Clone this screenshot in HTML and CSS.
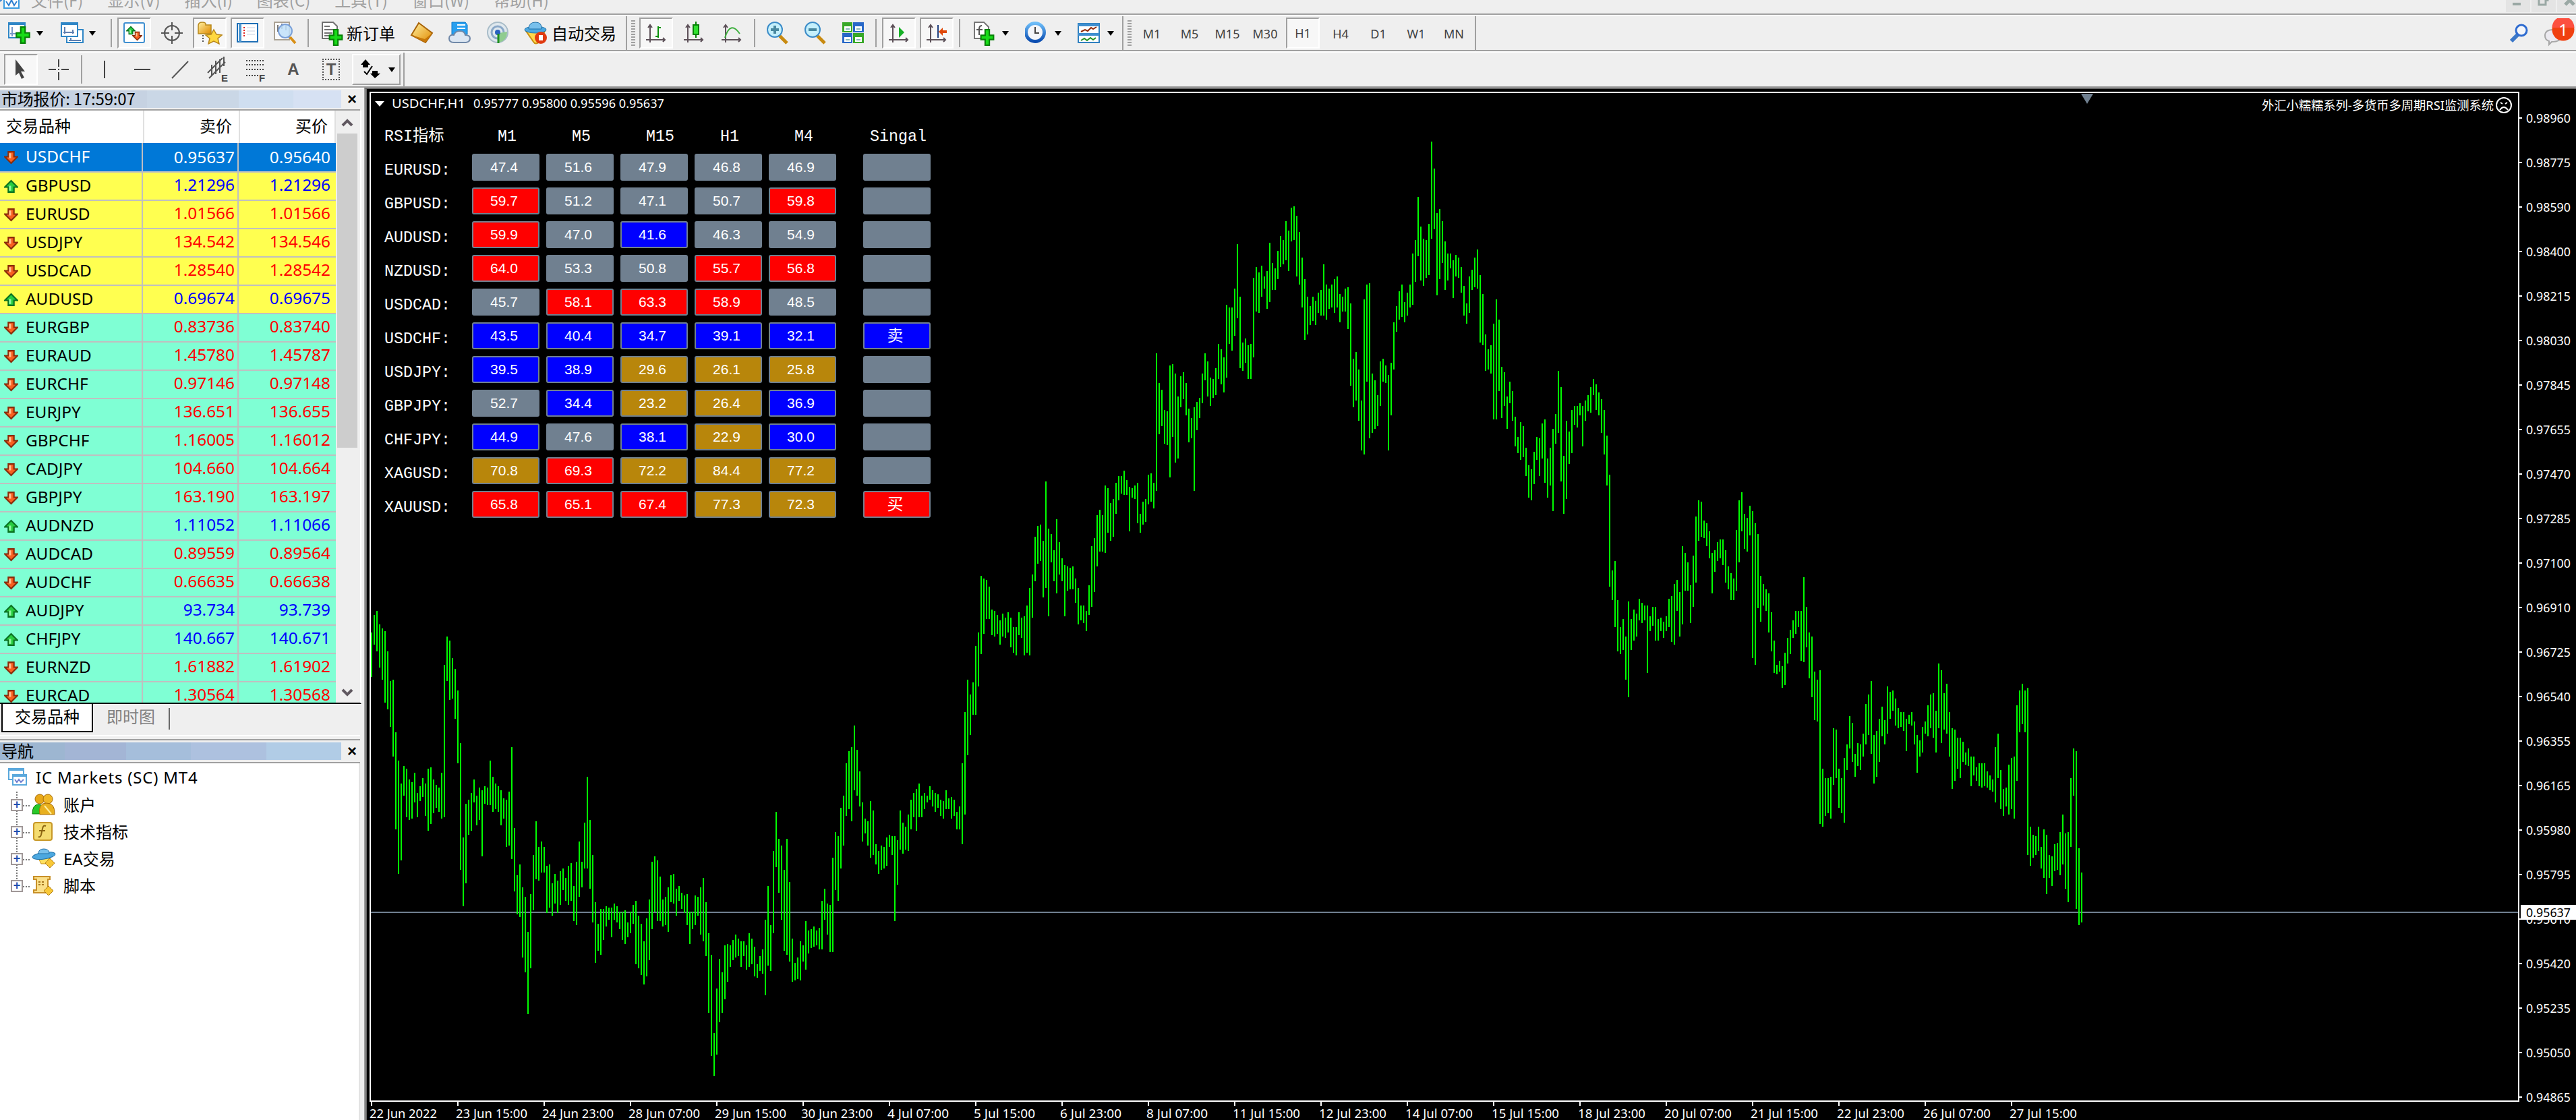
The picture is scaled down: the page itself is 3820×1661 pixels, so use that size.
FILE: index.html
```html
<!DOCTYPE html>
<html lang="zh-CN">
<head>
    <meta charset="UTF-8">
    <title>IC Markets (SC) MT4</title>
    <link rel="stylesheet" href="styles.css">
</head>
<body>
    <svg class="defs">
        <defs>
            <linearGradient id="blueGrad" x1="0" y1="0" x2="0" y2="1"><stop offset="0" stop-color="#6cbcf8"/><stop offset="1" stop-color="#0a4cb0"/></linearGradient>
            <linearGradient id="goldGrad" x1="0" y1="0" x2="1" y2="1"><stop offset="0" stop-color="#fff0a0"/><stop offset="1" stop-color="#e08a00"/></linearGradient>
        </defs>
        <symbol id="plus" viewBox="0 0 20 24"><path d="M7 1h6v8h6v6h-6v8H7v-8H1V9h6z" fill="#18dc18" stroke="#078007" stroke-width="2"/></symbol>
        <symbol id="down" viewBox="0 0 20 20"><path d="M6 2h8v7h5l-9 9-9-9h5z" fill="#f86020" stroke="#8a2c0a" stroke-width="2"/><path d="M7 4h3v7H7z" fill="#ffc090"/></symbol>
        <symbol id="up" viewBox="0 0 20 20"><path d="M6 18h8v-7h5l-9-9-9 9h5z" fill="#28cc40" stroke="#0a7020" stroke-width="2"/><path d="M7 9h3v7H7z" fill="#90f8a0"/></symbol>
        <symbol id="axes" viewBox="0 0 34 34"><path d="M8 5v26M2 27h28M5 9l3-4 3 4M27 24l3 3-3 3" fill="none" stroke="#5c5058" stroke-width="2"/></symbol>
    </svg>

    <div class="menu">
        <svg class="menu-icon" width="30" height="14" viewBox="0 0 30 14"><rect x="6" y="-8" width="22" height="20" fill="#fff" stroke="#3a9be0" stroke-width="2"/><path d="M0 2l6-6M9 2l4 6 4-8 4 8 4-6" fill="none" stroke="#2f7fd0" stroke-width="2"/></svg>
        <span>文件(F)</span><span>显示(V)</span><span>插入(I)</span><span>图表(C)</span><span>工具(T)</span><span>窗口(W)</span><span>帮助(H)</span>
        <div class="win-buttons">
            <i><svg width="36" height="18"><path d="M10 6h12" stroke="#9aa8a4" stroke-width="4"/></svg></i>
            <i><svg width="36" height="18"><path d="M11-2h10v9H11zM24-4v6" fill="none" stroke="#9aa8a4" stroke-width="3"/></svg></i>
            <i><svg width="30" height="18"><path d="M12-6L25 7M25-6L12 7" stroke="#9aa8a4" stroke-width="5"/></svg></i>
        </div>
    </div>

    <div class="toolbar">
        <div class="drop"><svg width="36" height="34" viewBox="0 0 36 34"><rect x="3" y="2" width="24" height="22" fill="#fff" stroke="#2f86c6" stroke-width="2"/><path d="M2 3h26" stroke="#2f86c6" stroke-width="4"/><path d="M8 8v14M5 18h12" stroke="#7898c8" stroke-width="2"/><use href="#plus" x="12" y="7" width="24" height="26"/></svg><b class="tri"></b></div>
        <div class="drop"><svg width="38" height="34" viewBox="0 0 38 34"><rect x="11" y="12" width="24" height="19" fill="#fff" stroke="#2f86c6" stroke-width="2"/><rect x="3" y="2" width="24" height="20" fill="#fff" stroke="#2f86c6" stroke-width="2"/><path d="M2 3h26" stroke="#2f86c6" stroke-width="4"/><path d="M8 8v10M6 16h16M20 12v6M14 28h18M17 24v5" stroke="#6080b0" stroke-width="2"/></svg><b class="tri"></b></div>
        <div class="sep first"></div>
        <div class="btn on"><svg width="34" height="34" viewBox="0 0 34 34"><rect x="2" y="2" width="30" height="29" rx="2" fill="#fff" stroke="#3f8fd0" stroke-width="2"/><use href="#up" x="5" y="6" width="14" height="14"/><use href="#down" x="14" y="14" width="15" height="15"/></svg></div>
        <div class="btn"><svg width="34" height="34" viewBox="0 0 34 34"><circle cx="17" cy="17" r="11" fill="none" stroke="#555" stroke-width="2"/><path d="M17 1v12M17 21v12M1 17h12M21 17h12" stroke="#555" stroke-width="2"/></svg></div>
        <div class="btn on"><svg width="38" height="34" viewBox="0 0 38 34"><path d="M2 6q0-5 6-5t5 4h8v13H2z" fill="url(#goldGrad)" stroke="#b8891c" stroke-width="1.5"/><path d="M9 20v12" stroke="#555" stroke-width="2" stroke-dasharray="2 2"/><path d="M25 12l4 7 8 1-6 5 2 8-8-4-8 4 2-8-6-5 8-1z" fill="#ffd840" stroke="#b8861a" stroke-width="1.5"/></svg></div>
        <div class="btn on"><svg width="34" height="34" viewBox="0 0 34 34"><rect x="2" y="3" width="30" height="27" fill="#fff" stroke="#1f6fb6" stroke-width="2"/><path d="M6 3v27" stroke="#4f98d0" stroke-width="4"/><path d="M12 8v14" stroke="#e02020" stroke-width="2" stroke-dasharray="2 2"/><path d="M16 9h12M16 14h12M16 19h12" stroke="#c8d0e0"/></svg></div>
        <div class="btn"><svg width="36" height="36" viewBox="0 0 36 36"><path d="M2 2h22v26H2z" fill="#fafafa" stroke="#aaa294" stroke-width="2"/><path d="M7 6v10M13 4v8M19 6v8" stroke="#777" stroke-width="2"/><circle cx="18" cy="15" r="10" fill="#bfe0fa" fill-opacity=".85" stroke="#7aa0d8" stroke-width="2"/><path d="M25 24l8 9" stroke="#d89018" stroke-width="4"/></svg></div>
        <div class="sep"></div>
        <div class="order"><svg width="34" height="38" viewBox="0 0 34 38"><path d="M2 3h16l6 6v18H2z" fill="#fff" stroke="#707070" stroke-width="2"/><path d="M5 9h8M5 14h14M5 19h12M5 23h8" stroke="#707070" stroke-width="2"/><use href="#plus" x="10" y="13" width="24" height="25"/></svg>新订单</div>
        <div class="btn"><svg width="36" height="34" viewBox="0 0 36 34"><path d="M13 2l20 15-10 14L2 20z" fill="url(#goldGrad)" stroke="#a8640a" stroke-width="2"/><path d="M2 20l20 6 11-9-10 14z" fill="#c87808"/></svg></div>
        <div class="btn"><svg width="36" height="34" viewBox="0 0 36 34"><path d="M6 1h20l3 4v14H6z" fill="#28a0f0" stroke="#0a78c8"/><path d="M14 5h12M14 10h12" stroke="#fff" stroke-width="2"/><path d="M9 31q-7 0-7-6t7-5q2-6 9-6t8 6q7 0 7 5t-6 6z" fill="#dce6f2" stroke="#7088a8" stroke-width="2"/></svg></div>
        <div class="btn"><svg width="36" height="34" viewBox="0 0 36 34"><circle cx="18" cy="16" r="15" fill="#dfe8ee" stroke="#a8bcc8" stroke-width="2"/><circle cx="18" cy="16" r="9" fill="none" stroke="#8aa8c8" stroke-width="3"/><path d="M20 17v14q12-3 12-16z" fill="#90cc90"/><circle cx="18" cy="16" r="4" fill="#2860c0"/><path d="M19 18v14" stroke="#209020" stroke-width="3"/></svg></div>
        <div class="auto"><svg width="36" height="34" viewBox="0 0 36 34"><path d="M4 14h28l-8 16q-6 5-9 0z" fill="#ffd84c" stroke="#c89010" stroke-width="2"/><ellipse cx="18" cy="12" rx="16" ry="5" fill="#4ca8e0" stroke="#1f70a8"/><path d="M8 11q0-10 10-10t9 10z" fill="#78c0ec" stroke="#1f70a8"/><circle cx="26" cy="24" r="9" fill="#e03a10"/><rect x="23" y="20" width="6" height="8" fill="#fff"/></svg>自动交易</div>
        <div class="line"></div>
        <div class="grip"></div>
        <div class="btn on"><svg width="34" height="34"><use href="#axes"/><path d="M20 7v17M20 9h4M16 22h4" stroke="#089008" stroke-width="2"/></svg></div>
        <div class="btn"><svg width="34" height="34"><use href="#axes"/><path d="M20 0v24" stroke="#078007" stroke-width="2"/><rect x="16" y="5" width="8" height="14" fill="#30e030" stroke="#078007" stroke-width="2"/></svg></div>
        <div class="btn"><svg width="34" height="34"><use href="#axes"/><path d="M7 24q8-26 22-6" fill="none" stroke="#3fb03f" stroke-width="2"/></svg></div>
        <div class="sep"></div>
        <div class="btn"><svg width="34" height="34" viewBox="0 0 34 34"><path d="M20 21l11 11" stroke="#c88a10" stroke-width="5"/><circle cx="13" cy="12" r="11" fill="#c4f0fc" stroke="#3c8cc8" stroke-width="2"/><path d="M13 6v12M7 12h12" stroke="#4888a0" stroke-width="4"/></svg></div>
        <div class="btn"><svg width="34" height="34" viewBox="0 0 34 34"><path d="M20 21l11 11" stroke="#c88a10" stroke-width="5"/><circle cx="13" cy="12" r="11" fill="#c4f0fc" stroke="#3c8cc8" stroke-width="2"/><path d="M7 12h12" stroke="#4888a0" stroke-width="4"/></svg></div>
        <div class="btn"><svg width="34" height="34" viewBox="0 0 34 34"><path d="M1 1h15v15H1zM17 17h16v15H17z" fill="#38a828"/><path d="M17 1h16v15H17zM1 17h15v15H1z" fill="#2868c8"/><path d="M4 7h10v7H4zM20 7h10v7H20zM4 23h10v7H4zM20 23h10v7H20z" fill="#fff"/><path d="M6 11h6M22 11h6M6 27h6M22 27h6" stroke="#88b8b8" stroke-width="2"/></svg></div>
        <div class="sep"></div>
        <div class="btn on"><svg width="34" height="34"><use href="#axes"/><path d="M17 8v16l8-8z" fill="#18b028"/></svg></div>
        <div class="btn on"><svg width="34" height="34"><use href="#axes"/><path d="M19 5v19" stroke="#204080" stroke-width="2"/><path d="M20 15l6-6v4h6v4h-6v4z" fill="#e04808"/></svg></div>
        <div class="sep"></div>
        <div class="drop"><svg width="34" height="38" viewBox="0 0 34 38"><path d="M3 3h14l7 7v17H3z" fill="#fff" stroke="#777" stroke-width="2"/><path d="M14 8q-4 0-4 5v9M6 14h9" fill="none" stroke="#555" stroke-width="2"/><use href="#plus" x="10" y="13" width="24" height="25"/></svg><b class="tri"></b></div>
        <div class="drop"><svg width="34" height="34" viewBox="0 0 34 34"><circle cx="15" cy="16" r="13.500" fill="#f4f6fa" stroke="url(#blueGrad)" stroke-width="5"/><path d="M15 8v9h6" fill="none" stroke="#444" stroke-width="2"/></svg><b class="tri"></b></div>
        <div class="drop"><svg width="34" height="34" viewBox="0 0 34 34"><rect x="1" y="3" width="31" height="28" fill="#fff" stroke="#2f80c0" stroke-width="2"/><path d="M1 5h31M1 19h31" stroke="#3f8fd0" stroke-width="4"/><path d="M5 15l6-3 4 2 5-5 3 2 5-3" fill="none" stroke="#902808" stroke-width="2"/><path d="M5 28l5-3 4 3 5-4 4 3 4-3" fill="none" stroke="#209020" stroke-width="2"/></svg><b class="tri"></b></div>
        <div class="line near"></div>
        <div class="grip"></div>
        <div class="btn tf">M1</div><div class="btn tf">M5</div><div class="btn tf">M15</div><div class="btn tf">M30</div><div class="btn tf on">H1</div><div class="btn tf">H4</div><div class="btn tf">D1</div><div class="btn tf">W1</div><div class="btn tf">MN</div>
        <div class="line"></div>
        <div class="right-tools">
            <svg width="30" height="30" viewBox="0 0 30 30"><path d="M13 17L3 27" stroke="#3c78c8" stroke-width="6"/><circle cx="18" cy="11" r="8" fill="#f4f6fa" stroke="#2f6cd0" stroke-width="3"/></svg>
            <svg width="50" height="44" viewBox="0 0 50 44"><path d="M4 26q0-9 12-9t12 9q0 9-14 9l-4 4v-5q-6-2-6-8z" fill="#eceaf0" stroke="#a8a8a8" stroke-width="2"/><circle cx="31" cy="17" r="16.5" fill="#f04010"/><path d="M14.500 14a16.500 16.500 0 0 1 33 0z" fill="#fc5040"/><text x="31" y="26" text-anchor="middle" class="badge">1</text></svg>
        </div>
    </div>

    <div class="toolbar second">
        <div class="btn on"><svg width="34" height="34" viewBox="0 0 34 34"><path d="M9 2l14 18h-6l5 9-4 2-4-9-5 4z" fill="#444"/></svg></div>
        <div class="btn"><svg width="34" height="34" viewBox="0 0 34 34"><path d="M17 2v11M17 21v12M2 17h11M21 17h11M16 17h2" stroke="#444" stroke-width="2"/></svg></div>
        <div class="sep"></div>
        <div class="btn"><svg width="34" height="34"><path d="M17 4v26" stroke="#444" stroke-width="2"/></svg></div>
        <div class="btn"><svg width="34" height="34"><path d="M5 17h24" stroke="#444" stroke-width="2"/></svg></div>
        <div class="btn"><svg width="34" height="34"><path d="M5 30L29 5" stroke="#555" stroke-width="2"/></svg></div>
        <div class="btn"><svg width="34" height="38"><path d="M2 24L24 2M4 32L28 8M8 12v16M14 6v20M20 4v20M26 0v14" stroke="#555" stroke-width="2"/><text x="22" y="37" class="tiny">E</text></svg></div>
        <div class="btn"><svg width="34" height="38"><path d="M3 6h28M3 12h28M3 19h28M3 28h18" stroke="#444" stroke-width="2" stroke-dasharray="2 2"/><text x="22" y="37" class="tiny">F</text></svg></div>
        <div class="btn glyph">A</div>
        <div class="btn glyph"><span class="boxed">T</span></div>
        <div class="shapes"><svg width="30" height="34" viewBox="0 0 30 34"><path d="M8 2l7 8-3 0v4H4v-4H1zM22 30l-7-7h3v-4h8v4h4z"/><path d="M6 20l4 4 8-12" fill="none" stroke="#000" stroke-width="2"/></svg><b class="tri"></b></div>
        <div class="line short"></div>
    </div>

    <div class="main">
        <div class="side">
            <div class="panel-title market"><span>市场报价: 17:59:07</span><b>×</b></div>
            <div class="quotes">
                <div class="quote-list">
                    <div class="quote-head"><span>交易品种</span><span>卖价</span><span>买价</span></div>
                    <div id="quotes"></div>
                </div>
                <div class="scroll">
                    <svg width="30" height="34"><path d="M8 22l7-7 7 7" fill="none" stroke="#605860" stroke-width="4"/></svg>
                    <div class="thumb"></div>
                    <svg width="30" height="34"><path d="M8 13l7 7 7-7" fill="none" stroke="#605860" stroke-width="4"/></svg>
                </div>
            </div>
            <div class="tabs"><span class="tab active">交易品种</span><span class="tab">即时图</span><i></i></div>
            <div class="panel-title nav"><span>导航</span><b>×</b></div>
            <div class="tree">
                <div class="root"><svg width="34" height="30" viewBox="0 0 34 30"><rect x="3" y="2" width="22" height="16" fill="#fff" stroke="#5aa8dc" stroke-width="2"/><path d="M2 3h24" stroke="#5aa8dc" stroke-width="4"/><rect x="9" y="11" width="20" height="15" fill="#fff" stroke="#5aa8dc" stroke-width="2"/><path d="M8 12h22" stroke="#5aa8dc" stroke-width="4"/><path d="M12 18l3 4 3-4 3 4 4-4" fill="none" stroke="#7080d0" stroke-width="2"/></svg>IC Markets (SC) MT4</div>
                <div class="node"><u>+</u><svg width="36" height="34" viewBox="0 0 36 34"><circle cx="12" cy="8" r="7" fill="#e8a818" stroke="#a86c08"/><circle cx="24" cy="8" r="7" fill="#f0b828" stroke="#a86c08"/><path d="M1 30q0-14 9-14t9 14z" fill="#28c828" stroke="#078007"/><path d="M12 31q-3-17 10-17t12 17z" fill="#e8b020" stroke="#a86c08"/><path d="M19 18l10 12" stroke="#fff0a0" stroke-width="2"/></svg>账户</div>
                <div class="node"><u>+</u><svg width="36" height="34" viewBox="0 0 36 34"><rect x="3" y="3" width="27" height="26" rx="3" fill="#f4dc70" stroke="#c89828" stroke-width="2"/><path d="M21 8q-4-2-5 4l-2 9q-1 4-4 3M11 15h9" fill="none" stroke="#8a6410" stroke-width="2"/></svg>技术指标</div>
                <div class="node"><u>+</u><svg width="36" height="34" viewBox="0 0 36 34"><path d="M9 14h18l-5 10h-8z" fill="#ffe060" stroke="#c89010"/><ellipse cx="18" cy="12" rx="17" ry="5" fill="#4ca8e0" stroke="#1f70a8" transform="rotate(-8 18 12)"/><path d="M10 9q0-7 8-7t8 7z" fill="#78c0ec" stroke="#1f70a8"/><path d="M27 16l7 7-7 7-7-7z" fill="#f8c838" stroke="#b07c10"/></svg>EA交易</div>
                <div class="node"><u>+</u><svg width="36" height="34" viewBox="0 0 36 34"><path d="M3 3h24v4h-3v16h3v4H3v-4h4V7H3z" fill="#fbe08a" stroke="#c89028" stroke-width="2"/><path d="M10 11h10M10 15h10" stroke="#a87820" stroke-width="2" stroke-dasharray="3 2"/><path d="M25 17l7 7-7 7-7-7z" fill="#f8c838" stroke="#b07c10"/></svg>脚本</div>
            </div>
        </div>
        <div class="chart">
            <svg id="chart" viewBox="544 132 3276 1529">
                <path d="M549 1632V137H3735V1633H548" class="frame"/>
                <path d="M550 1353H3734" class="price-line"/>
                <path id="bars" class="bars"/>
                <path id="ticks" class="frame"/>
                <path d="M3086 139h18l-9 15z" fill="#708090"/>
                <path d="M556 150h14l-7 8z" fill="#fff"/>
                <text x="581" y="159.500" textLength="109" lengthAdjust="spacingAndGlyphs">USDCHF,H1</text>
                <text x="702" y="159.500" textLength="283" lengthAdjust="spacingAndGlyphs">0.95777 0.95800 0.95596 0.95637</text>
                <text x="3354" y="163" textLength="344" lengthAdjust="spacingAndGlyphs">外汇小糯糯系列-多货币多周期RSI监测系统</text>
                <g fill="none" stroke="#fff" stroke-width="2"><circle cx="3713" cy="156" r="11"/><path d="M3707 163q6-8 12 0M3708 152l3 2M3718 152l-3 2"/></g>
                <g id="labels"></g>
                <rect x="3738" y="1342" width="82" height="22" fill="#fff"/>
                <text x="3746" y="1360" textLength="66" lengthAdjust="spacingAndGlyphs" class="now">0.95637</text>
            </svg>
            <div class="rsi" id="rsi">
                <span class="label">RSI指标</span><span class="head">M1</span><span class="head">M5</span><span class="head">M15</span><span class="head">H1</span><span class="head">M4</span><span class="head signal">Singal</span>
            </div>
        </div>
    </div>
    <script src="script.js"></script>
</body>
</html>
```
FILE: styles.css
```css
body {
    margin: 0;
    width: 3820px;
    height: 1661px;
    overflow: hidden;
    background: #efefef;
    font-family: "Noto Sans", "Noto Sans CJK SC", sans-serif;
    font-size: 24px;
    color: #000;
}
.defs {
    position: absolute;
    width: 0;
    height: 0;
}
svg {
    display: block;
    flex: none;
}
.menu {
    display: flex;
    height: 20px;
    border-bottom: 2px solid #a0a0a0;
    overflow: hidden;
    line-height: 20px;
    color: #a0a0a0;
    font-family: "Noto Sans CJK SC", sans-serif;
}
.menu-icon {
    margin-right: 16px;
}
.menu span {
    margin-top: -10px;
    margin-right: 36px;
    white-space: nowrap;
}
.win-buttons {
    display: flex;
    gap: 2px;
    margin-left: auto;
}
.win-buttons i {
    width: 36px;
    height: 18px;
    background: #e4e4e4;
}
.win-buttons i:last-child {
    width: 28px;
}
.toolbar {
    display: flex;
    align-items: center;
    gap: 6px;
    height: 50px;
    border-top: 2px solid #fff;
    border-bottom: 2px solid #a0a0a0;
}
.toolbar.second {
    padding-left: 6px;
}
.btn {
    box-sizing: border-box;
    width: 50px;
    height: 46px;
    display: flex;
    align-items: center;
    justify-content: center;
    flex: none;
}
.btn.on {
    border: 2px solid;
    border-color: #a0a0a0 #fff #fff #a0a0a0;
    background: #f7f7f7;
}
.tf {
    font-size: 18px;
    color: #404040;
    padding-top: 2px;
}
.tf.on {
    padding-top: 0;
}
.glyph {
    font: bold 24px "Liberation Sans", sans-serif;
    color: #555;
}
.boxed {
    width: 22px;
    line-height: 28px;
    text-align: center;
    border: 2px dotted #555;
}
.tiny {
    font: bold 15px "Liberation Sans", sans-serif;
    fill: #444;
}
.badge {
    font: 24px "Noto Sans", sans-serif;
    fill: #fff;
}
.drop {
    box-sizing: border-box;
    width: 72px;
    padding-left: 10px;
    display: flex;
    align-items: center;
    justify-content: space-between;
    padding-right: 8px;
    flex: none;
}
.tri {
    border: 5px solid transparent;
    border-top: 7px solid #000;
    border-bottom: 0;
}
.sep {
    width: 2px;
    height: 42px;
    margin: 0 2px;
    background: #a0a0a0;
}
.sep.first {
    margin-left: 8px;
}
.line {
    width: 2px;
    height: 50px;
    background: #a0a0a0;
}
.line.near {
    margin-left: -2px;
}
.line.short {
    margin-left: -2px;
}
.grip {
    width: 6px;
    height: 38px;
    background: repeating-linear-gradient(#a0a0a0 0 2px, #efefef 2px 4px);
}
.grip + .tf {
    margin-left: -1px;
}
.order, .auto {
    box-sizing: border-box;
    display: flex;
    align-items: center;
    white-space: nowrap;
    height: 46px;
    flex: none;
    line-height: 40px;
    font-family: "Noto Sans CJK SC", sans-serif;
}
.order {
    width: 129px;
    padding-left: 10px;
    gap: 4px;
}
.auto {
    width: 153px;
    padding-left: 7px;
    gap: 6px;
}
.right-tools {
    display: flex;
    align-items: center;
    gap: 19px;
    margin-left: auto;
}
.shapes {
    box-sizing: border-box;
    width: 72px;
    height: 46px;
    padding: 0 6px 0 10px;
    display: flex;
    align-items: center;
    justify-content: space-between;
    border: 2px solid;
    border-color: #fff #a0a0a0 #a0a0a0 #fff;
}
.main {
    display: flex;
    height: 1531px;
}
.side {
    width: 540px;
    flex: none;
    border-top: 2px solid #fff;
}

/* market watch */
.panel-title {
    display: flex;
    align-items: center;
    border-bottom: 2px solid #a0a0a0;
    font-family: "Noto Sans CJK SC", sans-serif;
    width: 534px;
    box-sizing: border-box;
}
.panel-title span {
    width: 504px;
    padding-left: 2px;
    white-space: nowrap;
}
.panel-title b {
    margin-left: 9px;
    font: bold 24px/20px "Liberation Sans", sans-serif;
}
.market {
    height: 32px;
}
.market span {
    height: 26px;
    line-height: 23px;
    letter-spacing: -0.2px;
    background: linear-gradient(90deg, #c0ccdd 0 16%, #c6d2e2 16% 43%, #cad7e6 43% 70%, #cfdef0 70% 86%, #d6e1f3 86%);
}
.quotes {
    display: flex;
    width: 534px;
    height: 878px;
    overflow: hidden;
    border-right: 2px solid #fff;
    border-bottom: 2px solid #000;
}
.quote-list {
    width: 498px;
    margin-right: 2px;
    background: #fff;
}
.quote-head {
    display: flex;
    height: 48px;
    line-height: 44px;
    font-family: "Noto Sans CJK SC", sans-serif;
}
.quote-head span {
    box-sizing: border-box;
    width: 142px;
    border-right: 2px solid #e0e0e0;
    padding-right: 10px;
    text-align: right;
}
.quote-head span:first-child {
    width: 214px;
    padding-left: 9px;
    text-align: left;
}
.quote {
    display: flex;
    height: 40px;
    line-height: 36px;
    border-bottom: 2px solid #c0c0c0;
    background: #7fffd4;
    color: #f00;
    text-align: right;
    font-size: 24.400px;
}
.quote.yellow {
    background: #ffff50;
}
.quote.rise {
    color: #00f;
}
.quote.selected {
    height: 42px;
    line-height: 42px;
    background: #0078d7;
    color: #fff;
}
.quote span {
    box-sizing: border-box;
    width: 142px;
    padding-right: 4px;
    border-right: 2px solid #c0c0c0;
}
.quote span:last-child {
    width: 144px;
    padding-right: 8px;
    border-right: 0;
}
.quote span.pair {
    display: flex;
    align-items: center;
    gap: 11px;
    width: 212px;
    height: 38px;
    padding-left: 6px;
    color: #000;
}
.quote.selected span.pair {
    height: 42px;
    color: #fff;
}
.quote span.pair svg {
    margin-top: 3px;
}
.quote span.pair {
    height: 100%;
    padding-bottom: 2px;
}
.scroll {
    width: 30px;
    margin-right: 4px;
}
.thumb {
    height: 466px;
    margin: 0 0 346px;
    background: #cdcdcd;
}
.tabs {
    display: flex;
    align-items: flex-start;
    width: 534px;
    height: 46px;
    border-bottom: 2px solid #fff;
    font-family: "Noto Sans CJK SC", sans-serif;
}
.tab {
    line-height: 36px;
    margin-left: 20px;
    color: #808080;
}
.tab.active {
    box-sizing: border-box;
    width: 136px;
    height: 42px;
    margin-left: 2px;
    padding-left: 18px;
    background: #fff;
    border: 2px solid #000;
    border-top: 0;
    color: #000;
}
.tabs i {
    width: 2px;
    height: 32px;
    margin: 6px 0 0 20px;
    background: #696969;
}

/* navigator */
.nav {
    height: 36px;
    margin-top: 4px;
    border-top: 2px solid #a0a0a0;
}
.nav span {
    height: 26px;
    line-height: 23px;
    background: linear-gradient(90deg, #9db6d1 0 19%, #a3b5d5 19% 37%, #a5bedb 37% 56%, #adc1df 56% 78%, #b1cce6 78%);
}
.tree {
    width: 532px;
    height: 529px;
    background: #fff;
    border-right: 2px solid #e3e3e3;
    font-size: 24px;
}
.root {
    display: flex;
    align-items: center;
    gap: 9px;
    height: 42px;
    padding-left: 10px;
    line-height: 38px;
    letter-spacing: 0.8px;
}
.node {
    display: flex;
    align-items: center;
    height: 40px;
    line-height: 38px;
    background: repeating-linear-gradient(#777 0 2px, #fff 2px 4px) 24px 0 / 2px 40px no-repeat, repeating-linear-gradient(90deg, #777 0 2px, #fff 2px 4px) 34px 20px / 12px 2px no-repeat;
}
.node:last-child {
    background-size: 2px 20px, 12px 2px;
}
.node u {
    box-sizing: border-box;
    width: 18px;
    height: 18px;
    margin: 0 13px 0 16px;
    border: 2px solid #a09898;
    background: #fff;
    color: #2050b0;
    font: bold 18px/13px "Liberation Sans", sans-serif;
    text-align: center;
    text-decoration: none;
}
.node svg {
    margin-right: 11px;
}

/* chart */
.chart {
    position: relative;
    flex: 1;
    background: #000;
    border-left: 2px solid #a0a0a0;
    border-top: 2px solid #696969;
    box-shadow: inset 2px 0 #696969;
}
#chart {
    margin-left: 2px;
    width: 3276px;
    height: 1529px;
    font-family: "Noto Sans", "Noto Sans CJK SC", sans-serif;
    font-size: 18px;
    fill: #fff;
}
.frame {
    fill: none;
    stroke: #fff;
    stroke-width: 2;
    shape-rendering: crispEdges;
}
.price-line {
    stroke: #708090;
    stroke-width: 2;
    shape-rendering: crispEdges;
}
.bars {
    fill: #0f0;
    shape-rendering: crispEdges;
}
.now {
    fill: #000;
}
.rsi {
    position: absolute;
    left: 28px;
    top: 46px;
    display: grid;
    grid-template-columns: 120px repeat(5, 100px) 100px;
    grid-auto-rows: 40px;
    gap: 10px;
    color: #fff;
}
.rsi .label {
    font: 23.300px/50px "Liberation Mono", "Noto Sans CJK SC", monospace;
    white-space: nowrap;
}
.rsi .head {
    padding-left: 38px;
    font: 23.300px/50px "Liberation Mono", monospace;
}
.rsi .signal {
    margin-left: 30px;
    padding-left: 10px;
}
.cell {
    box-sizing: border-box;
    height: 40px;
    padding-right: 5px;
    border: 2px solid #708090;
    border-radius: 3px;
    background: #708090;
    font: 21px/35px "Liberation Sans", "Noto Sans CJK SC", sans-serif;
    text-align: center;
}
.cell.last {
    width: 100px;
    margin-left: 30px;
    font-size: 24px;
}
.cell.red {
    background: #f00;
}
.cell.blue {
    background: #00f;
}
.cell.gold {
    background: #b8860b;
}
```
FILE: script.js
```js
// market watch: symbol, bid, ask, direction
const quotes = [
    ['USDCHF', '0.95637', '0.95640', 0], ['GBPUSD', '1.21296', '1.21296', 1],
    ['EURUSD', '1.01566', '1.01566', 0], ['USDJPY', '134.542', '134.546', 0],
    ['USDCAD', '1.28540', '1.28542', 0], ['AUDUSD', '0.69674', '0.69675', 1],
    ['EURGBP', '0.83736', '0.83740', 0], ['EURAUD', '1.45780', '1.45787', 0],
    ['EURCHF', '0.97146', '0.97148', 0], ['EURJPY', '136.651', '136.655', 0],
    ['GBPCHF', '1.16005', '1.16012', 0], ['CADJPY', '104.660', '104.664', 0],
    ['GBPJPY', '163.190', '163.197', 0], ['AUDNZD', '1.11052', '1.11066', 1],
    ['AUDCAD', '0.89559', '0.89564', 0], ['AUDCHF', '0.66635', '0.66638', 0],
    ['AUDJPY', '93.734', '93.739', 1], ['CHFJPY', '140.667', '140.671', 1],
    ['EURNZD', '1.61882', '1.61902', 0], ['EURCAD', '1.30564', '1.30568', 0]
];
document.getElementById('quotes').innerHTML = quotes.map(([name, bid, ask, rise], i) => `
    <div class="quote ${i === 0 ? 'selected' : i < 6 ? 'yellow' : ''} ${rise ? 'rise' : ''}">
        <span class="pair"><svg width="21" height="21"><use href="#${rise ? 'up' : 'down'}"/></svg>${name}</span><span>${bid}</span><span>${ask}</span>
    </div>`).join('');

// RSI table: s = neutral, r = red, b = blue, g = gold
const colors = { s: '', r: 'red', b: 'blue', g: 'gold' };
const rsi = [
    ['EURUSD', '47.4s 51.6s 47.9s 46.8s 46.9s', 's'],
    ['GBPUSD', '59.7r 51.2s 47.1s 50.7s 59.8r', 's'],
    ['AUDUSD', '59.9r 47.0s 41.6b 46.3s 54.9s', 's'],
    ['NZDUSD', '64.0r 53.3s 50.8s 55.7r 56.8r', 's'],
    ['USDCAD', '45.7s 58.1r 63.3r 58.9r 48.5s', 's'],
    ['USDCHF', '43.5b 40.4b 34.7b 39.1b 32.1b', '卖b'],
    ['USDJPY', '39.5b 38.9b 29.6g 26.1g 25.8g', 's'],
    ['GBPJPY', '52.7s 34.4b 23.2g 26.4g 36.9b', 's'],
    ['CHFJPY', '44.9b 47.6s 38.1b 22.9g 30.0b', 's'],
    ['XAGUSD', '70.8g 69.3r 72.2g 84.4g 77.2g', 's'],
    ['XAUUSD', '65.8r 65.1r 67.4r 77.3g 72.3g', '买r']
];
function cell(v, extra) {
    return `<span class="cell ${extra} ${colors[v.slice(-1)]}">${v.slice(0, -1)}</span>`;
}
document.getElementById('rsi').innerHTML += rsi.map(([name, values, signal]) =>
    `<span class="label">${name}:</span>` + values.split(' ').map(v => cell(v, '')).join('') + cell(signal, 'last')
).join('');

// H1 bars as high,low pairs; every block keeps its own vertical scale
const blocks = [
    { top: 780, scale: 1.7798, data: [
        281,399,235,313,224,331,260,374,271,406,278,466,331,484,409,530,406,609,545,801,
        619,918,680,883,634,712,641,769,669,776,676,772,651,730,705,769,687,726,666,715,
        680,765,641,804,637,787,669,758,683,744,691,755,651,772,367,769,292,409,303,459,
        349,456,377,509,434,626,573,908,822,1004,733,943,723,815,705,804,669,730,712,790,
        691,776,698,872,687,733,691,737,619,737,662,755,680,748,687,755,698,790,719,772,
        723,847,701,844,584,879,797,965,922,1025,893,1032,954,1139,979,1178,1071,1289,972,1168,
        869,1014,780,933,847,936,833,915,847,915,897,1022,893,1007,943,1029,918,997,936,1022,
        911,1000,904,961,929,990,897,1000,890,990,950,1043,886,1054,833,979,886,954,783,904,
        662,904,776,958,869,1047,993,1153,1050,1121,1011,1132,1011,1093,1004,1057,1007,1039,1007,1086,
        997,1039,1004,1047,1018,1064,1018,1093,1014,1103,1047,1086,1018,1075,1000,1050,990,1157,1029,1168,
        1050,1185,1096,1210,1036,1189,986,1146,886,1064,872,1018,883,1043,925,1043,986,1057,979,1054,
        954,1071,922,993,918,997,958,1029,950,990,968,1011,975,1022,972,1054,1018,1103,1018,1064,
        975,1054,979,1029,954,1079,929,1096,993,1136,1075,1285,1132,1399,1338,1452,1221,1395,1143,1310,
        1178,1285,1107,1249,1103,1203,1107,1164,1093,1146,1079,1139,1089,1136,1096,1164,1096,1136,1107,1171,
        1075,1164,1089,1157,1111,1189,1157,1192,1136,1175,1118,1182,1039,1239,950,1160,1054,1175,858,1075,
        755,901,826,968,844,1039,908,1121,826,1132,940,1150,1089,1203,1153,1200,1139,1196,1096,1200,
        1107,1150,1043,1171,1068,1128,1064,1114,1057,1111,1068,1107,1061,1118,990,1118,958,1039,997,1079,
        1000,1125,876,1125,808,961,819,990,744,904,712,844,626,765,594,748,584,780,527,698,
        591,712,648,740,730,833,772,812,780,844,726,876,751,869,840,893,858,918,844,908,
        847,904,822,897,815,847,819,869,819,1043,829,947,751,854,783,865,794,854,762,858,
        723,801,705,769,694,804,680,769,712,769,705,748,712,730,687,723,698,740,705,755,
        708,744,723,765,726,772
    ] },
    { top: 700, scale: 1.6316, data: [
        770,816,790,816,786,839,793,832,822,865,809,865,705,901,581,829,503,685,538,636,
        509,587,421,587,388,519,251,441,258,392,261,356,277,356,333,395,336,398,346,392,
        359,418,343,398,352,401,339,388,352,424,375,437,375,444,339,395,352,401,349,444,
        323,437,281,444,248,352,157,264,131,222,127,215,166,303,23,281,137,349,150,219,
        189,264,114,294,170,248,209,264,225,349,228,287,232,284,228,284,258,317,281,369,
        323,359,323,365,336,385,274,346,179,326,160,290,104,228,91,193,104,193,33,196,
        39,147,75,166,65,157,26,101,10,69,10,52
    ] },
    { top: 180, scale: 2.6133, data: [
        1354,1448,1390,1448,1416,1589,1422,1458,1411,1463,1401,1558,1521,1595,1474,1563,1463,1552,1369,1484,
        1364,1474,1401,1500,899,1432,1014,1213,1040,1181,1119,1249,1124,1254,946,1380,941,1223,977,1322,
        1066,1307,988,1108,972,1077,1014,1139,1113,1244,1150,1228,1108,1432,1087,1197,1071,1150,977,1092,
        899,1004,930,1066,993,1103,998,1071,956,1061,862,998,883,1019,915,1051,711,993,721,862,
        721,889,648,831,476,763,679,956,857,967,841,936,868,998,862,998,606,915,564,737,
        585,742,559,679,601,648,580,727,470,700,549,653,570,653,502,612,444,564,460,554,
        387,538,423,580,335,465,329,460,366,601,429,632,528,721,612,847,679,826,716,789,
        679,774,695,789,664,742,653,753,554,753,632,768,648,727,632,721,612,742,601,721,
        669,779,679,737,648,737,643,805,706,1024,920,1108,894,1082,962,1160,1082,1275,690,1291,
        632,1009,627,1228,977,1207,1004,1192,1061,1181,930,1103,920,1009,946,1014,983,1275,936,1139,
        779,962,716,815,659,768,632,758,700,779,664,753,632,721,512,711,460,622,293,523,
        408,617,455,638,460,606,397,596,78,455,183,418,355,674,340,612,387,549,465,653,
        512,617,512,570,538,685,517,601,528,606,564,664,638,753,706,784,601,742,575,653,
        528,643,497,648,596,857,669,868,826,967,883,962,868,977,784,1155,690,1155,768,1045,
        951,1150,972,1103,1066,1192,1009,1092,1045,1160,1145,1260,1223,1286,1166,1312,1181,1301,1265,1375,
        1333,1458,1348,1469,1281,1406,1223,1312,1228,1375,1171,1307,1155,1401,1307,1458,1265,1411,1192,1511,
        1134,1249,967,1207,1030,1396,1296,1521,1160,1463,1202,1328,1119,1286,1103,1176,1103,1186,1092,1139,
        1103,1260,1082,1160,1061,1124,1030,1129,998,1061,1019,1119,1051,1139,1077,1207,1119,1291,1218,1411
    ] },
    { top: 440, scale: 1.6333, data: [
        431,702,663,735,640,800,735,859,800,866,781,856,823,928,738,970,781,856,758,833,
        768,823,732,784,742,791,748,784,748,911,774,810,751,797,751,833,781,833,777,810,
        787,826,774,810,732,801,725,836,696,843,686,761,715,823,604,794,621,712,644,712,
        699,791,627,751,532,693,493,591,497,581,542,585,549,604,568,634,621,719,614,666,
        595,640,588,634,588,650,614,693,653,709,670,735,683,735,565,712,493,644,474,568,
        526,611,536,617,506,578,519,875,549,892,575,755,676,787,696,748,709,761,719,813,
        764,859,833,911,892,915,882,908,895,947,862,941,826,889,807,866,784,826,761,817,
        761,800,761,882,679,885,751,849,813,924,823,970,908,1026,928,1029,905,1277,1143,1284,
        1166,1258,1166,1251,1163,1264,1045,1183,1049,1166,1143,1238,1166,1251,1117,1274,1085,1147,1016,1094,
        1032,1127,1107,1163,1081,1137,1085,1147,1058,1114,987,1085,964,1062,931,1107,1062,1179,1052,1163,
        1022,1127,993,1065,1026,1085,944,1058,957,1022,954,1003,973,1039,996,1045,1006,1042,1006,1052,
        1022,1101,1013,1036,1006,1039,1029,1085,1062,1153,1075,1114,1042,1104,1029,1058,990,1065,964,1045,
        960,1068,1003,1104,889,1045,905,1081,960,1049,938,1058,1006,1114,1045,1192,1049,1173,1068,1143,
        1068,1166,1078,1127,1104,1134,1094,1137,1114,1186,1114,1160,1140,1173,1130,1186,1130,1189,1130,1186,
        1150,1189,1160,1196,1169,1199,1091,1225,1058,1166,1147,1241,1192,1258,1189,1235,1134,1254,1117,1241,
        1114,1264,990,1173,954,1055,938,1036,954,1055,947,1352,1284,1379,1303,1359,1307,1352,1284,1343,
        1333,1385,1290,1408,1303,1447,1352,1408,1356,1428,1326,1392,1323,1388,1297,1401,1254,1375,1300,1434,
        1297,1467,1166,1333,1094,1209,1101,1483,1336,1522,1395,1516
    ] }
];
let x = 550;
let path = '';
for (const b of blocks) {
    for (let i = 0; i < b.data.length; i += 2) {
        const hi = Math.round((b.top + b.data[i] / b.scale) / 2) * 2;
        const lo = Math.round((b.top + b.data[i + 1] / b.scale) / 2) * 2;
        path += `M${x} ${hi}h2V${lo}h-2z`;
        x += 4;
    }
}
document.getElementById('bars').setAttribute('d', path);

// axes
const prices = ['0.98960', '0.98775', '0.98590', '0.98400', '0.98215', '0.98030', '0.97845', '0.97655',
    '0.97470', '0.97285', '0.97100', '0.96910', '0.96725', '0.96540', '0.96355', '0.96165', '0.95980',
    '0.95795', '0.95610', '0.95420', '0.95235', '0.95050', '0.94865'];
const dates = ['22 Jun 2022', '23 Jun 15:00', '24 Jun 23:00', '28 Jun 07:00', '29 Jun 15:00', '30 Jun 23:00',
    '4 Jul 07:00', '5 Jul 15:00', '6 Jul 23:00', '8 Jul 07:00', '11 Jul 15:00', '12 Jul 23:00', '14 Jul 07:00',
    '15 Jul 15:00', '18 Jul 23:00', '20 Jul 07:00', '21 Jul 15:00', '22 Jul 23:00', '26 Jul 07:00', '27 Jul 15:00'];
let ticks = '';
let labels = '';
prices.forEach((p, i) => {
    const y = 175 + i * 66;
    ticks += `M3736 ${y}h4`;
    labels += `<text x="3746" y="${y + 7}" textLength="66" lengthAdjust="spacingAndGlyphs">${p}</text>`;
});
dates.forEach((d, i) => {
    const tx = 551 + i * 128;
    let w = 106;
    if (i === 0) w = 100;
    if (d.includes('Jul')) w = d.length === 12 ? 100 : 91;
    ticks += `M${tx} 1634v6`;
    labels += `<text x="${tx - 3}" y="1658" textLength="${w}" lengthAdjust="spacingAndGlyphs">${d}</text>`;
});
document.getElementById('ticks').setAttribute('d', ticks);
document.getElementById('labels').innerHTML = labels;
```
